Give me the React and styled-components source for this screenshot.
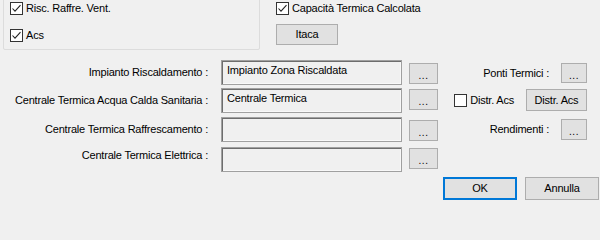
import React from "react";
import styled, { createGlobalStyle } from "styled-components";

const Global = createGlobalStyle`
  html, body { margin: 0; padding: 0; background: #f0f0f0; }
  body {
    font-family: "Liberation Sans", Arial, sans-serif;
    font-size: 11px;
    letter-spacing: -0.2px;
    color: #000;
  }
`;

const Root = styled.div`
  width: 600px;
  height: 200px;
  overflow: hidden;
  background: #f0f0f0;
`;

const TopRow = styled.div`
  display: flex;
  align-items: flex-start;
  height: 60px;
  padding-left: 3px;
  box-sizing: border-box;
`;

const GroupBox = styled.div`
  width: 257px;
  height: 58px;
  margin-top: -8px;
  box-sizing: border-box;
  border: 1px solid #dcdcdc;
  border-radius: 2px;
  padding: 9px 0 0 6px;
  display: flex;
  flex-direction: column;
  gap: 14px;
`;

const RightCol = styled.div`
  margin-left: 16px;
  padding-top: 2px;
  display: flex;
  flex-direction: column;
  align-items: flex-start;
  gap: 9px;
`;

const CheckRow = styled.label`
  display: flex;
  align-items: center;
  gap: 3px;
  height: 13px;
  line-height: 13px;
  white-space: nowrap;
`;

const Box = styled.span`
  width: 13px;
  height: 13px;
  box-sizing: border-box;
  border: 1px solid #333;
  background: #fff;
  display: inline-flex;
  align-items: center;
  justify-content: center;
  flex: none;
`;

const Button = styled.button`
  width: ${(p) => p.$w}px;
  height: ${(p) => p.$h}px;
  margin-top: ${(p) => p.$top || 0}px;
  box-sizing: border-box;
  border: 1px solid ${(p) => (p.$default ? "#0078d7" : "#adadad")};
  box-shadow: ${(p) => (p.$default ? "inset 0 0 0 1px #0078d7" : "none")};
  background: #e1e1e1;
  font-family: inherit;
  font-size: 11px;
  letter-spacing: -0.2px;
  color: #000;
  padding: 0;
  line-height: 1;
  flex: none;
`;

const Dots = styled(Button)`
  padding-top: 5px;
  font-size: 10px;
  letter-spacing: 0.5px;
`;

const FormGrid = styled.div`
  display: grid;
  grid-template-columns: 221px 188px 28px 163px;
  grid-template-rows: 28px 29px 30px 30px;
`;

const Label = styled.div`
  text-align: right;
  padding-right: 13px;
  margin-top: ${(p) => p.$top}px;
  line-height: 13px;
  white-space: nowrap;
`;

const Field = styled.div`
  width: 181px;
  height: 25px;
  box-sizing: border-box;
  border: 1px solid #a0a0a0;
  box-shadow: inset 1px 1px 0 #6d6d6d, inset -1px -1px 0 #f8f8f8;
  background: #f0f0f0;
  padding: 3px 5px;
  line-height: 13px;
  white-space: nowrap;
  overflow: hidden;
`;

const Side = styled.div`
  display: flex;
  justify-content: flex-end;
  align-items: center;
  padding-right: 13px;
  gap: ${(p) => p.$gap}px;
  height: ${(p) => p.$h}px;
  margin-top: ${(p) => p.$top}px;
`;

const SideText = styled.span`
  line-height: 13px;
  white-space: nowrap;
`;

const Footer = styled.div`
  display: flex;
  justify-content: flex-end;
  gap: 8px;
  padding-right: 1px;
`;

const Check = ({ checked }) => (
  <Box>
    {checked && (
      <svg width="11" height="11" viewBox="0 0 11 11">
        <polyline
          points="1.5,5.5 4,8.2 9.5,2.2"
          fill="none"
          stroke="#222"
          strokeWidth="1.1"
        />
      </svg>
    )}
  </Box>
);

const rows = [
  { label: "Impianto Riscaldamento :", value: "Impianto Zona Riscaldata", top: 6, dotsTop: 3 },
  { label: "Centrale Termica Acqua Calda Sanitaria :", value: "Centrale Termica", top: 6, dotsTop: 1 },
  { label: "Centrale Termica Raffrescamento :", value: "", top: 6, dotsTop: 3 },
  { label: "Centrale Termica Elettrica :", value: "", top: 2, dotsTop: 1 },
];

const sides = [
  (
    <Side $gap={12} $h={20} $top={3}>
      <SideText>Ponti Termici :</SideText>
      <Dots $w={26} $h={20}>...</Dots>
    </Side>
  ),
  (
    <Side $gap={12} $h={22} $top={1}>
      <CheckRow>
        <Check />
        <span>Distr. Acs</span>
      </CheckRow>
      <Button $w={61} $h={22}>Distr. Acs</Button>
    </Side>
  ),
  (
    <Side $gap={12} $h={21} $top={2}>
      <SideText>Rendimenti :</SideText>
      <Dots $w={26} $h={21}>...</Dots>
    </Side>
  ),
  <div />,
];

export default function App() {
  return (
    <Root>
      <Global />
      <TopRow>
        <GroupBox>
          <CheckRow>
            <Check checked />
            <span>Risc. Raffre. Vent.</span>
          </CheckRow>
          <CheckRow>
            <Check checked />
            <span>Acs</span>
          </CheckRow>
        </GroupBox>
        <RightCol>
          <CheckRow>
            <Check checked />
            <span>Capacità Termica Calcolata</span>
          </CheckRow>
          <Button $w={62} $h={21}>Itaca</Button>
        </RightCol>
      </TopRow>
      <FormGrid>
        {rows.map((r, i) => (
          <React.Fragment key={r.label}>
            <Label $top={r.top}>{r.label}</Label>
            <div>
              <Field>{r.value}</Field>
            </div>
            <div>
              <Dots $w={29} $h={21} $top={r.dotsTop}>...</Dots>
            </div>
            {sides[i]}
          </React.Fragment>
        ))}
      </FormGrid>
      <Footer>
        <Button $w={74} $h={23} $default>OK</Button>
        <Button $w={74} $h={23}>Annulla</Button>
      </Footer>
    </Root>
  );
}
